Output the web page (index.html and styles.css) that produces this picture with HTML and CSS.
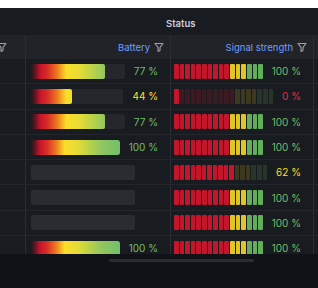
FILE: index.html
```html
<!DOCTYPE html>
<html>
<head>
<meta charset="utf-8">
<link rel="stylesheet" href="styles.css">
</head>
<body>
<div class="top"></div>
<div class="panel">
  <div class="group-row"><span class="group-title">Status</span></div>
  <div class="row head">
    <div class="cell c0"><svg class="filter cut" viewBox="0 0 10 10"><path d="M1 1.5H9L6 5.3V8.6L4 9.4V5.3Z"/></svg></div>
    <div class="cell hcell"><span>Battery</span><svg class="filter" viewBox="0 0 10 10"><path d="M1 1.5H9L6 5.3V8.6L4 9.4V5.3Z"/></svg></div>
    <div class="cell hcell"><span>Signal strength</span><svg class="filter" viewBox="0 0 10 10"><path d="M1 1.5H9L6 5.3V8.6L4 9.4V5.3Z"/></svg></div>
    <div class="cell c3"></div>
  </div>

  <div class="row">
    <div class="cell"></div>
    <div class="cell bat"><div class="track"><div class="fill" style="--v:79"></div></div><span class="val green">77 %</span></div>
    <div class="cell sig"><div class="lcd"><i class="s r"></i><i class="s r"></i><i class="s r"></i><i class="s r"></i><i class="s r"></i><i class="s r"></i><i class="s r"></i><i class="s r"></i><i class="s r"></i><i class="s r"></i><i class="s y"></i><i class="s y"></i><i class="s y"></i><i class="s g"></i><i class="s g"></i><i class="s g"></i></div><span class="val green">100 %</span></div>
    <div class="cell c3"></div>
  </div>

  <div class="row">
    <div class="cell"></div>
    <div class="cell bat"><div class="track"><div class="fill" style="--v:44"></div></div><span class="val yellow">44 %</span></div>
    <div class="cell sig"><div class="lcd"><i class="s r"></i><i class="s rd"></i><i class="s rd"></i><i class="s rd"></i><i class="s rd"></i><i class="s rd"></i><i class="s rd"></i><i class="s rd"></i><i class="s rd"></i><i class="s rd"></i><i class="s rd"></i><i class="s yd"></i><i class="s yd"></i><i class="s yd"></i><i class="s yd"></i><i class="s gd"></i><i class="s gd"></i><i class="s gd"></i></div><span class="val red">0 %</span></div>
    <div class="cell c3"></div>
  </div>

  <div class="row">
    <div class="cell"></div>
    <div class="cell bat"><div class="track"><div class="fill" style="--v:79"></div></div><span class="val green">77 %</span></div>
    <div class="cell sig"><div class="lcd"><i class="s r"></i><i class="s r"></i><i class="s r"></i><i class="s r"></i><i class="s r"></i><i class="s r"></i><i class="s r"></i><i class="s r"></i><i class="s r"></i><i class="s r"></i><i class="s y"></i><i class="s y"></i><i class="s y"></i><i class="s g"></i><i class="s g"></i><i class="s g"></i></div><span class="val green">100 %</span></div>
    <div class="cell c3"></div>
  </div>

  <div class="row">
    <div class="cell"></div>
    <div class="cell bat"><div class="track"><div class="fill" style="--v:100"></div></div><span class="val green">100 %</span></div>
    <div class="cell sig"><div class="lcd"><i class="s r"></i><i class="s r"></i><i class="s r"></i><i class="s r"></i><i class="s r"></i><i class="s r"></i><i class="s r"></i><i class="s r"></i><i class="s r"></i><i class="s r"></i><i class="s y"></i><i class="s y"></i><i class="s y"></i><i class="s g"></i><i class="s g"></i><i class="s g"></i></div><span class="val green">100 %</span></div>
    <div class="cell c3"></div>
  </div>

  <div class="row">
    <div class="cell"></div>
    <div class="cell bat"><div class="empty"></div></div>
    <div class="cell sig"><div class="lcd"><i class="s r"></i><i class="s r"></i><i class="s r"></i><i class="s r"></i><i class="s r"></i><i class="s r"></i><i class="s r"></i><i class="s r"></i><i class="s r"></i><i class="s r"></i><i class="s r"></i><i class="s yd"></i><i class="s yd"></i><i class="s yd"></i><i class="s gd"></i><i class="s gd"></i><i class="s gd"></i></div><span class="val yellow">62 %</span></div>
    <div class="cell c3"></div>
  </div>

  <div class="row">
    <div class="cell"></div>
    <div class="cell bat"><div class="empty"></div></div>
    <div class="cell sig"><div class="lcd"><i class="s r"></i><i class="s r"></i><i class="s r"></i><i class="s r"></i><i class="s r"></i><i class="s r"></i><i class="s r"></i><i class="s r"></i><i class="s r"></i><i class="s r"></i><i class="s y"></i><i class="s y"></i><i class="s y"></i><i class="s g"></i><i class="s g"></i><i class="s g"></i></div><span class="val green">100 %</span></div>
    <div class="cell c3"></div>
  </div>

  <div class="row">
    <div class="cell"></div>
    <div class="cell bat"><div class="empty"></div></div>
    <div class="cell sig"><div class="lcd"><i class="s r"></i><i class="s r"></i><i class="s r"></i><i class="s r"></i><i class="s r"></i><i class="s r"></i><i class="s r"></i><i class="s r"></i><i class="s r"></i><i class="s r"></i><i class="s y"></i><i class="s y"></i><i class="s y"></i><i class="s g"></i><i class="s g"></i><i class="s g"></i></div><span class="val green">100 %</span></div>
    <div class="cell c3"></div>
  </div>

  <div class="row">
    <div class="cell"></div>
    <div class="cell bat"><div class="track"><div class="fill" style="--v:100"></div></div><span class="val green">100 %</span></div>
    <div class="cell sig"><div class="lcd"><i class="s r"></i><i class="s r"></i><i class="s r"></i><i class="s r"></i><i class="s r"></i><i class="s r"></i><i class="s r"></i><i class="s r"></i><i class="s r"></i><i class="s r"></i><i class="s y"></i><i class="s y"></i><i class="s y"></i><i class="s g"></i><i class="s g"></i><i class="s g"></i></div><span class="val green">100 %</span></div>
    <div class="cell c3"></div>
  </div>
</div>
<div class="below"><div class="thumb"></div></div>
</body>
</html>
```

FILE: styles.css
```css
* { box-sizing: border-box; }
html, body { margin: 0; padding: 0; }
body {
  background: #111217;
  font-family: Inter, "Noto Sans", sans-serif;
  width: 318px;
  height: 288px;
  overflow: hidden;
}
.top { height: 8px; background: #ffffff; }
.panel {
  height: 246px;
  overflow: hidden;
  background: #181b1f;
}
.group-row {
  height: 27px;
  padding: 4px 0 0 166px;
  line-height: 23px;
  font-size: 9.5px;
  font-weight: 600;
  color: #ccccdc;
}
.row {
  display: grid;
  grid-template-columns: 26px 145px 143px 1fr;
  height: 25.3px;
  border-bottom: 1px solid #23262b;
}
.head {
  height: 24px;
  background: #212329;
  border-bottom: none;
}
.cell {
  border-right: 1px solid #2a2d33;
  display: flex;
  align-items: center;
  min-width: 0;
  overflow: hidden;
}
.c3 { border-right: none; }
.hcell {
  justify-content: flex-end;
  padding-right: 6px;
  gap: 4px;
  color: #6e9fff;
  font-size: 9.5px;
}
.filter {
  width: 10px;
  height: 10px;
  flex: none;
  fill: none;
  stroke: #9fa1aa;
  stroke-width: 1.1;
  stroke-linejoin: round;
}
.cut { margin-left: -3px; }
.bat { padding: 0 12px 0 5px; gap: 9px; }
.sig { padding: 0 12px 0 3px; gap: 9px; }
.track {
  flex: 1;
  height: 15px;
  background: #25272c;
  border-radius: 2px;
  overflow: hidden;
}
.fill {
  height: 100%;
  width: calc(var(--v) * 1%);
  border-radius: 2px;
  background-image: linear-gradient(90deg,
    #1e1a1e 0%, #5a1420 4%, #c8142c 10%, #d92e26 18%, #ec7a1e 28%,
    #fade2a 38%, #e6dc36 52%, #b8d24a 66%, #8fc660 80%, #73bf69 100%);
  background-size: calc(100% * 100 / var(--v)) 100%;
  background-repeat: no-repeat;
}
.empty {
  width: 104px;
  height: 15px;
  background: #2a2c31;
  border-radius: 2px;
}
.lcd {
  flex: 1;
  height: 15px;
  display: flex;
  gap: 1px;
}
.s { flex: 1; border-radius: 1px; }
.r { background: #c4162a; }
.y { background: #e0c526; }
.g { background: #63ae5a; }
.rd { background: #3b1a21; }
.yd { background: #3c391f; }
.gd { background: #273628; }
.val { font-size: 10px; white-space: nowrap; }
.green { color: #73bf69; }
.yellow { color: #fade2a; }
.red { color: #e02f44; }
.below { height: 34px; padding-top: 5px; }
.thumb {
  margin-left: 109px;
  width: 145px;
  height: 3px;
  background: #2b2d32;
  border-radius: 2px;
}
```
